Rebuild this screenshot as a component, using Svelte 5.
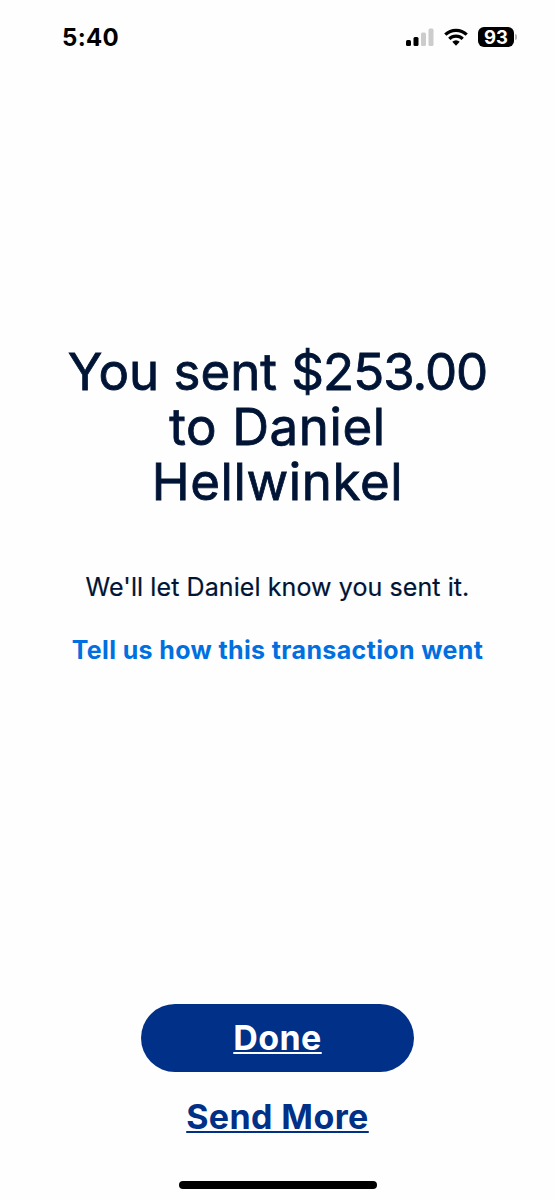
<script>
  export let time = '5:40';
  export let battery = 93;
  export let amount = '$253.00';
  export let firstName = 'Daniel';
  export let lastName = 'Hellwinkel';
</script>

<style>
  :global(body) {
    background-color: #fefefe;
  }

  .screen {
    box-sizing: border-box;
    display: flex;
    flex-direction: column;
    align-items: center;
    width: 555px;
    height: 1200px;
    padding-bottom: 11px;
    color: #001435;
    font-family: Inter, 'Liberation Sans', sans-serif;
    white-space: nowrap;
  }

  .status {
    box-sizing: border-box;
    display: flex;
    align-items: center;
    justify-content: space-between;
    width: 100%;
    height: 74px;
    padding: 0 38px 0 62px;
    color: #000;
  }

  .time {
    font-size: 24px;
    font-weight: 700;
    letter-spacing: 0.3px;
  }

  .icons {
    display: flex;
    align-items: center;
  }

  .signal {
    margin-right: 10px;
  }

  .wifi {
    margin-right: 10px;
  }

  .battery {
    display: flex;
    align-items: center;
  }

  .level {
    width: 36px;
    height: 20px;
    border-radius: 6px;
    background-color: #000;
    color: #fff;
    font-size: 18.5px;
    font-weight: 700;
    line-height: 20px;
    text-align: center;
  }

  .cap {
    width: 2px;
    height: 6px;
    margin-left: 1px;
    border-radius: 0 2px 2px 0;
    background-color: #b4b4b4;
  }

  .message {
    flex: 1;
    padding-top: 270px;
    text-align: center;
  }

  h1 {
    margin: 0;
    font-size: 51px;
    font-weight: 400;
    letter-spacing: 0.6px;
    line-height: 55px;
    -webkit-text-stroke: 0.8px;
  }

  .sent {
    letter-spacing: 0;
  }

  .amount {
    letter-spacing: -1px;
  }

  p {
    margin: 62px 0 0;
    font-size: 25px;
    letter-spacing: 0.09px;
    line-height: 32px;
    -webkit-text-stroke: 0.2px;
  }

  .feedback {
    display: block;
    margin-top: 31px;
    color: #0070e0;
    font-size: 25px;
    font-weight: 700;
    letter-spacing: 0.37px;
    line-height: 32px;
    text-decoration: none;
  }

  .done,
  .more {
    font-size: 34px;
    font-weight: 700;
    letter-spacing: 0.4px;
    text-decoration: underline;
    text-decoration-thickness: 2px;
    text-decoration-skip-ink: none;
    text-underline-offset: 2px;
  }

  .done {
    width: 273px;
    height: 68px;
    border-radius: 34px;
    background-color: #003087;
    color: #fff;
    line-height: 68px;
    text-align: center;
  }

  .more {
    margin-top: 25px;
    color: #003087;
    line-height: 40px;
  }

  .home {
    width: 198px;
    height: 8px;
    margin-top: 44px;
    border-radius: 4px;
    background-color: #000;
  }
</style>

<div class="screen">
  <div class="status">
    <span class="time">{time}</span>
    <div class="icons">
      <svg class="signal" width="28" height="18" viewBox="0 0 28 18">
        <rect x="0" y="12" width="5" height="6" rx="1.5" />
        <rect x="7.5" y="9" width="5" height="9" rx="1.5" />
        <rect x="15" y="4.5" width="5" height="13.5" rx="1.5" fill="#ccc" />
        <rect x="22.5" y="0.5" width="5" height="17.5" rx="1.5" fill="#ccc" />
      </svg>
      <svg class="wifi" width="24" height="18" viewBox="0 0 24 18">
        <g fill="none" stroke="#000" stroke-width="3.2">
          <path d="M1.3 6.7a15.2 15.2 0 0 1 21.4 0" />
          <path d="M5.3 10.9a9.5 9.5 0 0 1 13.4 0" />
        </g>
        <path d="M8.3 13.8a5.3 5.3 0 0 1 7.4 0L12 17.7z" />
      </svg>
      <div class="battery">
        <span class="level">{battery}</span>
        <span class="cap"></span>
      </div>
    </div>
  </div>

  <div class="message">
    <h1>
      <span class="sent">You sent <span class="amount">{amount}</span></span><br />
      to {firstName}<br />
      {lastName}
    </h1>
    <p>We'll let {firstName} know you sent it.</p>
    <a class="feedback" href="#feedback">Tell us how this transaction went</a>
  </div>

  <a class="done" href="#done">Done</a>
  <a class="more" href="#more">Send More</a>
  <div class="home"></div>
</div>
